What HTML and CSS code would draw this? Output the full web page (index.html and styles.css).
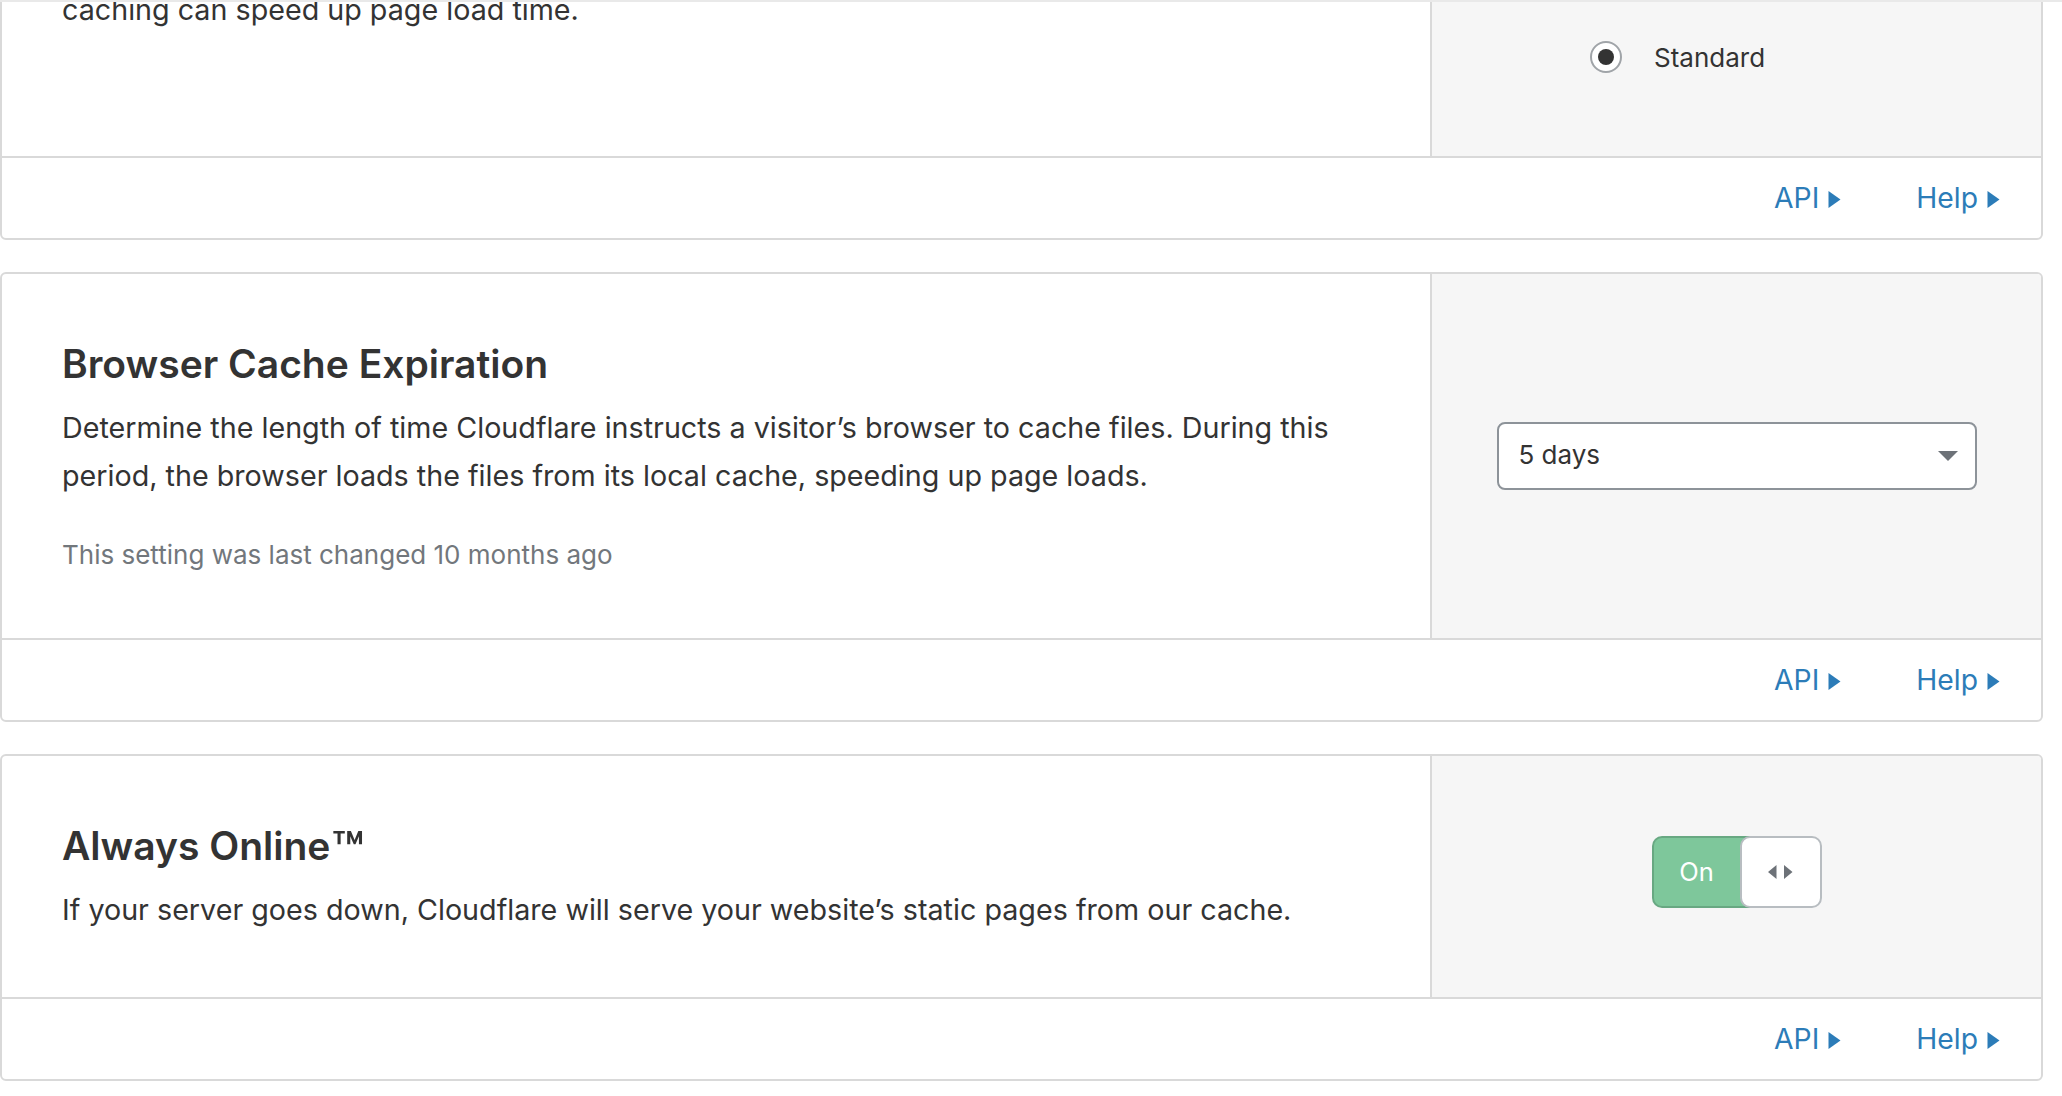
FILE: index.html
```html
<!DOCTYPE html>
<html lang="en">
<head>
<meta charset="utf-8">
<title>Caching settings</title>
<link rel="stylesheet" href="styles.css">
</head>
<body>
<div class="topbar"></div>
<main class="page">
  <section class="card">
    <div class="card-body">
      <div class="card-main">
        <h3 class="card-title">Caching Level</h3>
        <p class="card-desc">Determine how much of your website’s static content you want Cloudflare to cache. Increased<br>caching can speed up page load time.</p>
      </div>
      <div class="card-side card-side--radios">
        <ul class="radio-list">
          <li class="radio-item"><span class="radio"></span><span>No query string</span></li>
          <li class="radio-item"><span class="radio"></span><span>Ignore query string</span></li>
          <li class="radio-item"><span class="radio radio--checked"></span><span>Standard</span></li>
        </ul>
      </div>
    </div>
    <div class="card-footer">
      <a class="card-link" href="#">API<svg class="caret" width="13" height="17" viewBox="0 0 13 17"><path d="M0.5 0 L12.5 8.5 L0.5 17 Z" fill="currentColor"/></svg></a>
      <a class="card-link" href="#">Help<svg class="caret" width="13" height="17" viewBox="0 0 13 17"><path d="M0.5 0 L12.5 8.5 L0.5 17 Z" fill="currentColor"/></svg></a>
    </div>
  </section>

  <section class="card">
    <div class="card-body">
      <div class="card-main">
        <h3 class="card-title">Browser Cache Expiration</h3>
        <p class="card-desc">Determine the length of time Cloudflare instructs a visitor’s browser to cache files. During this period, the browser loads the files from its local cache, speeding up page loads.</p>
        <p class="card-meta">This setting was last changed 10 months ago</p>
      </div>
      <div class="card-side">
        <div class="select">
          <span class="select-value">5 days</span>
          <svg class="select-caret" width="20" height="10" viewBox="0 0 20 10"><path d="M0 0 H20 L10 10 Z" fill="#6d7278"/></svg>
        </div>
      </div>
    </div>
    <div class="card-footer">
      <a class="card-link" href="#">API<svg class="caret" width="13" height="17" viewBox="0 0 13 17"><path d="M0.5 0 L12.5 8.5 L0.5 17 Z" fill="currentColor"/></svg></a>
      <a class="card-link" href="#">Help<svg class="caret" width="13" height="17" viewBox="0 0 13 17"><path d="M0.5 0 L12.5 8.5 L0.5 17 Z" fill="currentColor"/></svg></a>
    </div>
  </section>

  <section class="card">
    <div class="card-body">
      <div class="card-main">
        <h3 class="card-title">Always Online<span class="tm">™</span></h3>
        <p class="card-desc">If your server goes down, Cloudflare will serve your website’s static pages from our cache.</p>
      </div>
      <div class="card-side">
        <div class="toggle">
          <span class="toggle-on">On</span>
          <span class="toggle-knob"><svg width="25" height="14" viewBox="0 0 25 14"><path d="M8.5 0 L0 7 L8.5 14 Z M16 0 L24.5 7 L16 14 Z" fill="#6d7278"/></svg></span>
        </div>
      </div>
    </div>
    <div class="card-footer">
      <a class="card-link" href="#">API<svg class="caret" width="13" height="17" viewBox="0 0 13 17"><path d="M0.5 0 L12.5 8.5 L0.5 17 Z" fill="currentColor"/></svg></a>
      <a class="card-link" href="#">Help<svg class="caret" width="13" height="17" viewBox="0 0 13 17"><path d="M0.5 0 L12.5 8.5 L0.5 17 Z" fill="currentColor"/></svg></a>
    </div>
  </section>
</main>
</body>
</html>
```

FILE: styles.css
```css
* { box-sizing: border-box; }

html, body {
  margin: 0;
  padding: 0;
  background: #fff;
}

body {
  font-family: Inter, "Liberation Sans", Arial, sans-serif;
  color: #333;
  overflow: hidden;
}

.topbar {
  position: fixed;
  top: 0;
  left: 0;
  right: 0;
  height: 2px;
  background: #e9e9e9;
  z-index: 10;
}

.page {
  width: 2043px;
  margin-top: -194px;
  display: flex;
  flex-direction: column;
  gap: 32px;
}

.card {
  border: 2px solid #d9d9d9;
  border-radius: 6px;
  background: #fff;
  overflow: hidden;
}

.card-body {
  display: grid;
  grid-template-columns: 1fr 611px;
}

.card-main {
  padding: 68px 60px 63px 60px;
}

.card-title {
  margin: 0 0 18px;
  font-size: 39px;
  line-height: 44px;
  font-weight: 600;
  color: #333;
}

.tm {
  font-size: 1.35em;
  line-height: 0;
  vertical-align: -0.18em;
  margin-left: 1px;
}

.card-desc {
  margin: 0;
  font-size: 28.7px;
  line-height: 48px;
  color: #333;
}

.card-meta {
  margin: 35px 0 0;
  font-size: 26px;
  line-height: 40px;
  color: #72777c;
}

.card-side {
  background: #f6f6f6;
  border-left: 2px solid #d9d9d9;
  display: flex;
  align-items: center;
  justify-content: center;
}

.card-side--radios {
  justify-content: flex-start;
  padding: 83px 0 83px 158px;
}

.radio-list {
  list-style: none;
  margin: 0;
  padding: 0;
  display: flex;
  flex-direction: column;
  gap: 43px;
}

.radio-item {
  display: flex;
  align-items: center;
  gap: 32px;
  height: 32px;
  font-size: 26px;
  color: #333;
}

.radio {
  width: 32px;
  height: 32px;
  border: 2.5px solid #a0a4a8;
  border-radius: 50%;
  background: #fff;
  display: flex;
  align-items: center;
  justify-content: center;
  flex: none;
}

.radio--checked::after {
  content: "";
  width: 16px;
  height: 16px;
  border-radius: 50%;
  background: #333;
}

.card-footer {
  display: flex;
  justify-content: flex-end;
  align-items: center;
  height: 82px;
  border-top: 2px solid #d9d9d9;
  padding-right: 41px;
  gap: 75px;
}

.card-link {
  display: inline-flex;
  align-items: baseline;
  gap: 9px;
  font-size: 28.3px;
  line-height: 40px;
  color: #2c7cb8;
  text-decoration: none;
}

.caret {
  flex: none;
}

.select {
  width: 480px;
  height: 68px;
  border: 2px solid #8d9399;
  border-radius: 8px;
  background: #fff;
  display: flex;
  align-items: center;
  justify-content: space-between;
  padding: 0 17px 3px 20px;
  font-size: 26px;
  color: #333;
}

.select-caret {
  margin-top: 3px;
}

.toggle {
  display: flex;
  width: 170px;
  height: 72px;
  margin-bottom: 10px;
}

.toggle-on {
  width: 98px;
  height: 72px;
  background: #7ec79b;
  border: 2px solid #68a882;
  border-right: none;
  border-radius: 10px 0 0 10px;
  color: #fff;
  font-size: 25.5px;
  display: flex;
  align-items: center;
  justify-content: center;
  padding-right: 10px;
}

.toggle-knob {
  width: 82px;
  height: 72px;
  margin-left: -10px;
  background: #fff;
  border: 2px solid #b8bdc1;
  border-radius: 10px;
  display: flex;
  align-items: center;
  justify-content: center;
}
```
